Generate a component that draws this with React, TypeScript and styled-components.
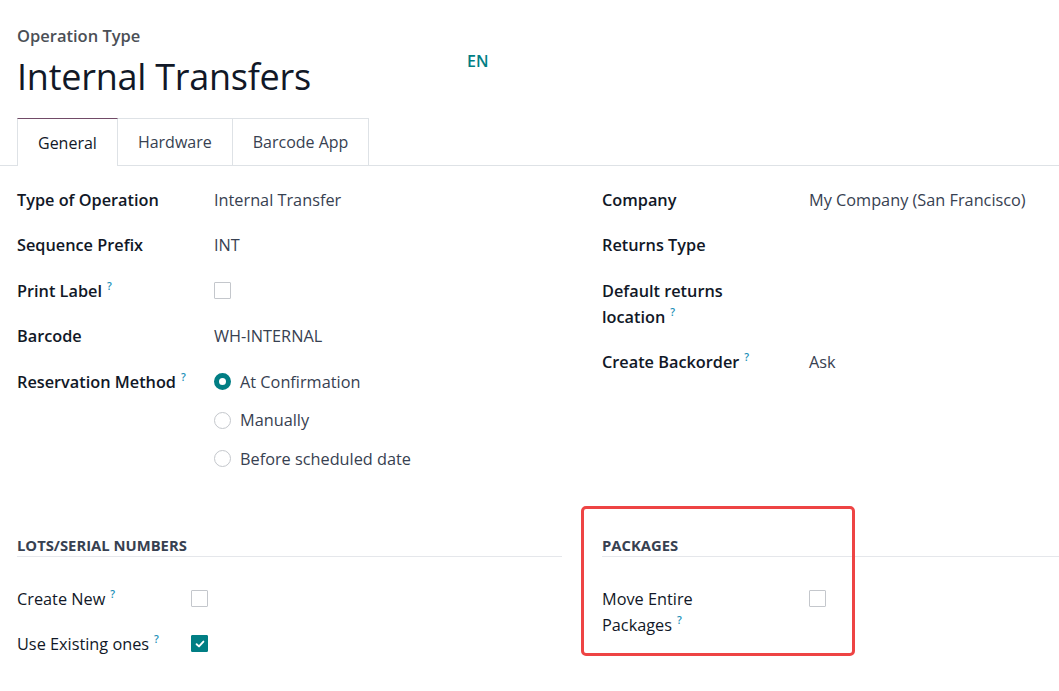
import styled, { createGlobalStyle } from "styled-components";

const GlobalStyle = createGlobalStyle`
  body {
    margin: 0;
    background: #ffffff;
    font-family: "Open Sans", "Noto Sans", sans-serif;
    color: #111827;
    overflow: hidden;
  }
`;

const teal = "#017e84";

type Row = { label: string; help?: boolean; value?: React.ReactNode };

function Help() {
  return <HelpMark>?</HelpMark>;
}

function Checkbox({ checked }: { checked?: boolean }) {
  return (
    <Box $checked={checked}>
      {checked && (
        <svg width="10" height="10" viewBox="0 0 10 10">
          <path d="M1.6 5.2 L4 7.4 L8.4 2.6" fill="none" stroke="#fff" strokeWidth="1.9" strokeLinecap="round" strokeLinejoin="round" />
        </svg>
      )}
    </Box>
  );
}

function Radio({ label, checked }: { label: string; checked?: boolean }) {
  return (
    <RadioRow>
      <RadioDot $checked={checked} />
      <span>{label}</span>
    </RadioRow>
  );
}

export default function App() {
  const leftRows: Row[] = [
    { label: "Type of Operation", value: "Internal Transfer" },
    { label: "Sequence Prefix", value: "INT" },
    { label: "Print Label", help: true, value: <Checkbox /> },
    { label: "Barcode", value: "WH-INTERNAL" },
    {
      label: "Reservation Method",
      help: true,
      value: (
        <RadioList>
          <Radio label="At Confirmation" checked />
          <Radio label="Manually" />
          <Radio label="Before scheduled date" />
        </RadioList>
      ),
    },
  ];

  const rightRows: Row[] = [
    { label: "Company", value: "My Company (San Francisco)" },
    { label: "Returns Type" },
    { label: "Default returns location", help: true },
    { label: "Create Backorder", help: true, value: "Ask" },
  ];

  return (
    <>
      <GlobalStyle />
      <Page>
        <Header>
          <TitleBlock>
            <Kicker>Operation Type</Kicker>
            <Title>Internal Transfers</Title>
          </TitleBlock>
          <Lang>EN</Lang>
        </Header>

        <TabBar>
          <Tab $active>General</Tab>
          <Tab>Hardware</Tab>
          <Tab>Barcode App</Tab>
        </TabBar>

        <Sheet>
          <Columns>
            <Group>
              {leftRows.map((r) => (
                <Field key={r.label} $labelWidth={197}>
                  <Label>
                    {r.label}
                    {r.help && <Help />}
                  </Label>
                  <Value>{r.value}</Value>
                </Field>
              ))}
            </Group>
            <Group>
              {rightRows.map((r) => (
                <Field key={r.label} $labelWidth={207}>
                  <Label $narrow={r.label === "Default returns location"}>
                    {r.label}
                    {r.help && <Help />}
                  </Label>
                  <Value>{r.value}</Value>
                </Field>
              ))}
            </Group>
          </Columns>

          <Columns $lower>
            <Group>
              <SectionTitle>Lots/Serial Numbers</SectionTitle>
              <SectionBody>
                <Field $labelWidth={174} $tight>
                  <Label $light>
                    Create New
                    <Help />
                  </Label>
                  <Value>
                    <Checkbox />
                  </Value>
                </Field>
                <Field $labelWidth={174} $tight>
                  <Label $light>
                    Use Existing ones
                    <Help />
                  </Label>
                  <Value>
                    <Checkbox checked />
                  </Value>
                </Field>
              </SectionBody>
            </Group>
            <Group>
              <Highlight />
              <SectionTitle>Packages</SectionTitle>
              <SectionBody>
                <Field $labelWidth={207} $tight>
                  <Label $light $narrow>
                    Move Entire Packages
                    <Help />
                  </Label>
                  <Value>
                    <Checkbox />
                  </Value>
                </Field>
              </SectionBody>
            </Group>
          </Columns>
        </Sheet>
      </Page>
    </>
  );
}

const Page = styled.div`
  width: 1147px;
  padding-top: 24px;
`;

const Header = styled.div`
  display: flex;
  align-items: flex-start;
  padding: 0 17px;
`;

const TitleBlock = styled.div`
  width: 450px;
`;

const Kicker = styled.div`
  font-size: 16.5px;
  font-weight: 600;
  color: #4b4f56;
  line-height: 24px;
`;

const Title = styled.h1`
  margin: 4px 0 0;
  font-size: 36px;
  font-weight: 400;
  line-height: 50px;
  color: #111827;
  letter-spacing: -0.25px;
`;

const Lang = styled.div`
  margin-top: 26px;
  font-size: 16px;
  font-weight: 600;
  color: ${teal};
`;

const TabBar = styled.div`
  display: flex;
  margin-top: 16px;
  padding-left: 17px;
  border-bottom: 1px solid #dee2e6;
  width: 1059px;
  box-sizing: border-box;
`;

const Tab = styled.div<{ $active?: boolean }>`
  padding: 0 20px;
  display: flex;
  align-items: center;
  font-size: 16px;
  border: 1px solid #dee2e6;
  border-left-width: ${(p) => (p.$active ? "1px" : "0")};
  border-top-color: ${(p) => (p.$active ? "#714b67" : "#dee2e6")};
  border-bottom: none;
  background: #fff;
  margin-bottom: ${(p) => (p.$active ? "-1px" : "0")};
  height: ${(p) => (p.$active ? "47px" : "46px")};
  color: ${(p) => (p.$active ? "#111827" : "#374151")};
`;

const Sheet = styled.div`
  padding: 11px 17px 0;
`;

const Columns = styled.div<{ $lower?: boolean }>`
  display: grid;
  grid-template-columns: 545px 545px;
  column-gap: 40px;
  margin-top: ${(p) => (p.$lower ? "52px" : "0")};
`;

const Group = styled.div`
  position: relative;
  display: flex;
  flex-direction: column;
`;

const Field = styled.div<{ $labelWidth: number; $tight?: boolean }>`
  display: grid;
  grid-template-columns: ${(p) => p.$labelWidth}px 1fr;
  padding: ${(p) => (p.$tight ? "9.5px 0" : "9.75px 0")};
  line-height: 26px;
  font-size: 16.3px;
`;

const Label = styled.div<{ $light?: boolean; $narrow?: boolean }>`
  font-weight: ${(p) => (p.$light ? 500 : 600)};
  color: #111827;
  max-width: ${(p) => (p.$narrow ? "140px" : "none")};
`;

const HelpMark = styled.span`
  position: relative;
  top: -7px;
  margin-left: 5px;
  font-size: 10.5px;
  line-height: 12px;
  font-weight: 600;
  color: #1a8fb8;
`;

const Value = styled.div`
  color: #374151;
  display: flex;
  align-items: flex-start;
  min-height: 26px;
`;

const Box = styled.span<{ $checked?: boolean }>`
  display: inline-flex;
  align-items: center;
  justify-content: center;
  width: 17px;
  height: 17px;
  margin-top: 4px;
  box-sizing: border-box;
  border: 1px solid ${(p) => (p.$checked ? teal : "#c4c7cc")};
  background: ${(p) => (p.$checked ? teal : "#fff")};
  border-radius: 1px;
`;

const RadioList = styled.div`
  display: flex;
  flex-direction: column;
  gap: 12.5px;
`;

const RadioRow = styled.div`
  display: flex;
  align-items: center;
  gap: 9px;
  color: #374151;
`;

const RadioDot = styled.span<{ $checked?: boolean }>`
  width: 17px;
  height: 17px;
  box-sizing: border-box;
  border-radius: 50%;
  border: ${(p) => (p.$checked ? `5px solid ${teal}` : "1px solid #c4c7cc")};
  background: #fff;
`;

const SectionTitle = styled.div`
  font-size: 14.8px;
  font-weight: 700;
  text-transform: uppercase;
  color: #374151;
  line-height: 22px;
  border-bottom: 1px solid #e5e7eb;
`;

const SectionBody = styled.div`
  padding-top: 20px;
`;

const Highlight = styled.div`
  position: absolute;
  left: -21px;
  top: -28px;
  width: 274px;
  height: 150px;
  border: 3px solid #ee4444;
  border-radius: 5px;
  box-sizing: border-box;
  pointer-events: none;
`;
